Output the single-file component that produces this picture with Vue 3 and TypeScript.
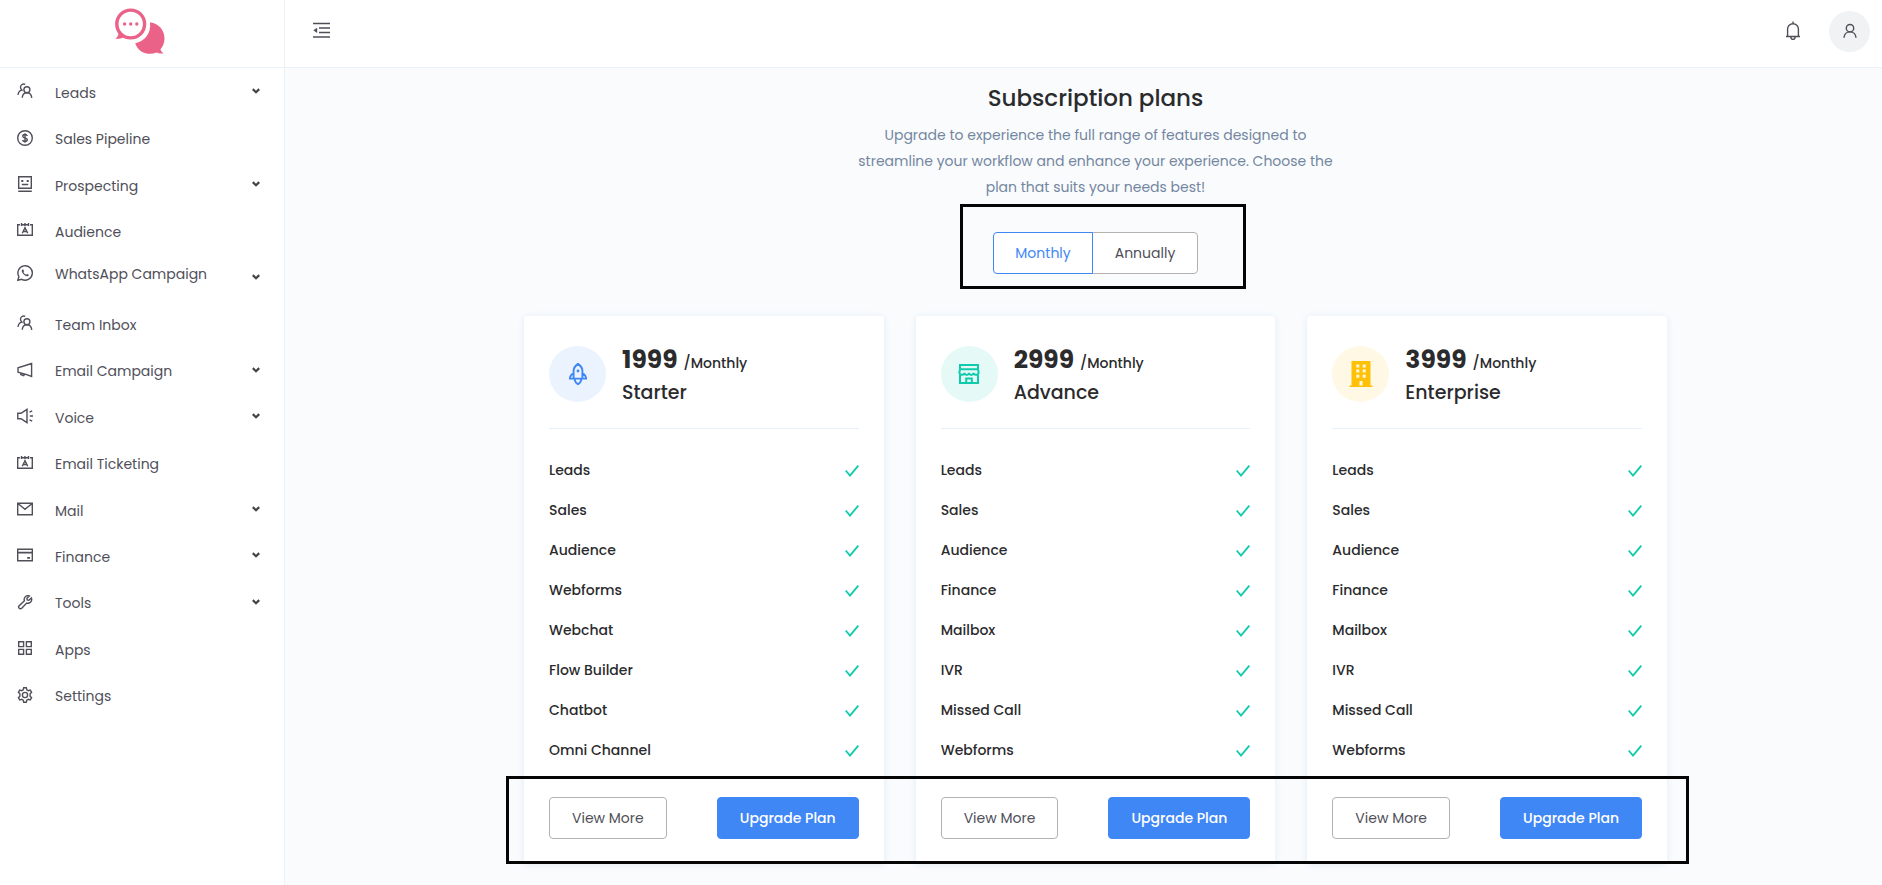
<script setup lang="ts">
import { ref } from 'vue'

interface NavItem {
  label: string
  icon: string
  expandable?: boolean
  raised?: boolean
}

interface Plan {
  name: string
  price: string
  tone: 'blue' | 'teal' | 'amber'
  features: string[]
}

const navItems: NavItem[] = [
  { label: 'Leads', icon: 'people', expandable: true },
  { label: 'Sales Pipeline', icon: 'dollar' },
  { label: 'Prospecting', icon: 'robot', expandable: true },
  { label: 'Audience', icon: 'board' },
  { label: 'WhatsApp Campaign', icon: 'whatsapp', expandable: true, raised: true },
  { label: 'Team Inbox', icon: 'people' },
  { label: 'Email Campaign', icon: 'megaphone', expandable: true },
  { label: 'Voice', icon: 'speaker', expandable: true },
  { label: 'Email Ticketing', icon: 'board' },
  { label: 'Mail', icon: 'mail', expandable: true },
  { label: 'Finance', icon: 'card', expandable: true },
  { label: 'Tools', icon: 'wrench', expandable: true },
  { label: 'Apps', icon: 'apps' },
  { label: 'Settings', icon: 'gear' },
]

const plans: Plan[] = [
  {
    name: 'Starter',
    price: '1999',
    tone: 'blue',
    features: ['Leads', 'Sales', 'Audience', 'Webforms', 'Webchat', 'Flow Builder', 'Chatbot', 'Omni Channel'],
  },
  {
    name: 'Advance',
    price: '2999',
    tone: 'teal',
    features: ['Leads', 'Sales', 'Audience', 'Finance', 'Mailbox', 'IVR', 'Missed Call', 'Webforms'],
  },
  {
    name: 'Enterprise',
    price: '3999',
    tone: 'amber',
    features: ['Leads', 'Sales', 'Audience', 'Finance', 'Mailbox', 'IVR', 'Missed Call', 'Webforms'],
  },
]

const period = ref<'Monthly' | 'Annually'>('Monthly')
</script>

<template>
  <div class="app">
    <aside class="sidebar">
      <a class="brand" href="#" aria-label="Home">
        <svg width="50" height="46" viewBox="0 0 50 46" aria-hidden="true">
          <circle cx="15.7" cy="16" r="13.9" fill="none" stroke="#ea6288" stroke-width="3.4" />
          <path d="M3.4 24.5c.4 2.200-.8 4.500-2.900 6.200 3.600.3 6.800-.4 9-2z" fill="#ea6288" />
          <circle cx="9.600" cy="16" r="1.700" fill="#ea6288" />
          <circle cx="15.700" cy="16" r="1.700" fill="#ea6288" />
          <circle cx="21.800" cy="16" r="1.700" fill="#ea6288" />
          <path d="M35 14.300C43.500 15.500 49.500 22 49.500 30.500c0 4.200-1.500 8-4 10.800.3 1.700 1.300 3 3.200 4-2.800.6-5.200.2-7.200-.8-2.400 1-5 1.500-7.800 1.300-6.400-.4-11.300-4.600-13.500-10.600C29.500 33.500 36.500 25.500 35 14.300z" fill="#ea6288" />
        </svg>
      </a>

      <nav class="nav" aria-label="Main">
        <component
          :is="item.expandable ? 'button' : 'a'"
          v-for="item in navItems"
          :key="item.label"
          class="nav-item"
          :href="item.expandable ? undefined : '#'"
          :type="item.expandable ? 'button' : undefined"
        >
          <span class="nav-lead" :class="{ 'nav-lead--raised': item.raised }">
            <svg class="line-icon" width="16" height="16" viewBox="0 0 16 16" aria-hidden="true">
              <g v-if="item.icon === 'people'">
                <path d="M5.200 14.800C5.400 12.400 6.900 9.700 9.900 9.700s4.600 2.700 4.900 5.100" />
                <circle cx="9.900" cy="6.700" r="3" />
                <path d="M8.200 1.400C6.500.400 3.500 1.200 3.500 4.200c0 1.500.7 2.300 1.400 2.900C2.400 7.600 1.300 9.500 1 11.800" />
              </g>
              <g v-else-if="item.icon === 'dollar'">
                <circle cx="8" cy="8" r="7.300" />
                <path d="M10.200 6C10 4.900 9.100 4.500 8 4.500c-1.300 0-2.200.6-2.200 1.700 0 2.500 4.500 1.100 4.500 3.600 0 1.100-1 1.700-2.300 1.700S5.800 11 5.700 9.900M8 3.200v9.600" />
              </g>
              <g v-else-if="item.icon === 'robot'">
                <path d="M1.700.700h12.600v11.600H1.700zM1.200 15.200h13.600M4.800 8.500h6.400" />
                <path d="M4.300 5h2M9.700 5h2" stroke-width="1.800" />
              </g>
              <g v-else-if="item.icon === 'board'">
                <path d="M3 2.700H.700v10.600h14.600V2.700H13M4.500 1v3M8 1v3M11.500 1v3M4.500 2.700h7" />
                <path d="M5.300 11.300 8 5.600l2.700 5.700M6.300 9.500h3.400" />
              </g>
              <g v-else-if="item.icon === 'whatsapp'">
                <path d="M.8 15.300 1.900 11.600A7.200 7.200 0 1 1 4.700 14.300z" />
                <path d="M5.300 4.400c-.9.700-.7 2.200.2 3.600 1.200 1.900 3 3.200 4.700 3.300.9 0 1.600-.6 1.700-1.500L10 8.900l-.8.900C8 9.300 7 8.400 6.400 7.100l.7-.8-.8-1.900z" fill="currentColor" stroke="none" />
              </g>
              <path v-else-if="item.icon === 'megaphone'" d="M14.600 1.500v13L9 12.300 1 10.300V5.800zM3.700 11v1.500l3 1.100 1-1.400" />
              <path v-else-if="item.icon === 'speaker'" d="M.8 5.300H4L10 1.400v13.200l-6-3.900H.8zM12.800 8H16M12.600 4.100l2.600-1.200M12.600 11.900l2.600 1.200" />
              <path v-else-if="item.icon === 'mail'" d="M.700 2.200h14.600v11.600H.700zM.900 2.500 8 8.300l7.100-5.800" />
              <g v-else-if="item.icon === 'card'">
                <path d="M.700 2.200h14.600v11.600H.700z" />
                <path d="M.700 5.600h14.600M10.200 10.900h2.800" stroke-width="1.700" />
              </g>
              <path v-else-if="item.icon === 'wrench'" d="M12.300 1.900 9.900 4.300l.3 1.700 1.700.3 2.500-2.400c.6 1.700.2 3.300-.9 4.400-1.100 1-2.500 1.200-3.800.8l-5 5.100a1.600 1.600 0 0 1-2.500-2.500l5.200-5C6.900 5.400 7.200 4 8.200 2.900 9.300 1.700 10.800 1.400 12.300 1.900z" />
              <path v-else-if="item.icon === 'apps'" d="M1.700 1.700h4.900v4.900H1.700zM9.400 1.700h4.900v4.900H9.400zM1.700 9.400h4.900v4.900H1.700zM9.400 9.400h4.900v4.900H9.400z" />
              <g v-else>
                <path d="M6.700.8h2.600l.5 2 1.500.9 2-.6 1.300 2.200-1.500 1.500v2.400l1.500 1.500-1.300 2.200-2-.6-1.500.9-.5 2H6.700l-.5-2-1.500-.9-2 .6-1.300-2.200 1.500-1.500V6.800L1.400 5.300l1.300-2.200 2 .6 1.500-.9z" />
                <circle cx="8" cy="8" r="2.600" />
              </g>
            </svg>
            <span class="nav-label">{{ item.label }}</span>
          </span>
          <svg v-if="item.expandable" class="chevron" width="8" height="6" viewBox="0 0 8 6" aria-hidden="true">
            <path d="M.8 1.100 4 4.300l3.200-3.200" />
          </svg>
        </component>
      </nav>
    </aside>

    <div class="page">
      <header class="topbar">
        <button class="icon-button" type="button" aria-label="Collapse menu">
          <svg class="line-icon" width="18" height="18" viewBox="0 0 18 18" aria-hidden="true">
            <path d="M0 1.500h17M6 6h11M6 10.500h11M0 15h17" stroke-width="1.700" />
            <path d="M.3 8.300 4.200 5.700v5.200z" fill="currentColor" stroke="none" />
          </svg>
        </button>
        <div class="topbar-actions">
          <button class="icon-button" type="button" aria-label="Notifications">
            <svg class="line-icon" width="16" height="20" viewBox="0 0 16 20" aria-hidden="true">
              <path d="M1 15.500h14M2.600 15.200V8.100a5.400 5.400 0 0 1 10.800 0v7.100M8 .5v2M5.800 16.200c.2 1.600 1 2.200 2.200 2.200s2-.6 2.200-2.200" />
            </svg>
          </button>
          <button class="avatar" type="button" aria-label="Account">
            <svg class="line-icon" width="16" height="16" viewBox="0 0 16 16" aria-hidden="true">
              <circle cx="8" cy="5.200" r="3.700" />
              <path d="M2 14.800C2.200 11.500 4.600 8.900 8 8.900s5.800 2.600 6 5.900" />
            </svg>
          </button>
        </div>
      </header>

      <main class="content">
        <h1 class="title">Subscription plans</h1>
        <p class="intro">
          Upgrade to experience the full range of features designed to streamline your workflow and
          enhance your experience. Choose the plan that suits your needs best!
        </p>

        <div class="period" role="group" aria-label="Billing period">
          <button class="period-option" type="button" :aria-pressed="period === 'Monthly'" @click="period = 'Monthly'">Monthly</button>
          <button class="period-option" type="button" :aria-pressed="period === 'Annually'" @click="period = 'Annually'">Annually</button>
          <span class="frame frame--period" aria-hidden="true"></span>
        </div>

        <div class="plans">
          <article v-for="plan in plans" :key="plan.name" class="plan">
            <header class="plan-head">
              <span class="plan-icon" :class="`plan-icon--${plan.tone}`">
                <svg v-if="plan.tone === 'blue'" width="20" height="24" viewBox="0 0 20 24" fill="none" stroke="currentColor" stroke-width="1.900" aria-hidden="true">
                  <path d="M10 1.900C7 4 5.600 6.200 5.600 8.800v7.800h8.800V8.800C14.400 6.200 13 4 10 1.900zM5.600 11.300C3.400 12.300 2 14 1.900 16.600h3.700M14.400 11.300c2.200 1 3.600 2.700 3.700 5.300h-3.700M6.600 17c.3 2.600 1.500 4.200 3.400 5.200 1.900-1 3.100-2.600 3.400-5.200" />
                  <circle cx="10" cy="9" r="1.400" fill="currentColor" stroke="none" />
                </svg>
                <svg v-else-if="plan.tone === 'teal'" width="22" height="22" viewBox="0 0 22 22" fill="none" stroke="currentColor" stroke-width="2" aria-hidden="true">
                  <path d="M2 1.900h18v4.300H2zM2 6.200l-.6 3.300c0 2.700 4.500 3.200 5.100.5.600 2.600 3.900 2.600 4.500 0 .6 2.600 3.900 2.600 4.500 0 .6 2.700 5.100 2.200 5.100-.5L20 6.200M2 12v8.100h18V12M8.200 20v-4.600h5.600V20" />
                </svg>
                <svg v-else width="24" height="28" viewBox="0 0 24 28" aria-hidden="true">
                  <path fill="currentColor" fill-rule="evenodd" d="M2.500 1h19v24.500h2V27h-23v-1.500h2zM7.300 4.500v3h3v-3zM13.700 4.500v3h3v-3zM7.300 9.600v3h3v-3zM13.700 9.600v3h3v-3zM7.300 14.700v3h3v-3zM13.700 14.700v3h3v-3zM10.500 21v4.500h3V21z" />
                </svg>
              </span>
              <div class="plan-text">
                <p class="price"><strong>{{ plan.price }}</strong><span>/Monthly</span></p>
                <h2 class="plan-name">{{ plan.name }}</h2>
              </div>
            </header>
            <ul class="features">
              <li v-for="feature in plan.features" :key="feature" class="feature">
                <span>{{ feature }}</span>
                <svg class="check" width="14" height="14" viewBox="0 0 14 14" aria-hidden="true">
                  <path d="M.7 7.500 5 12.500 13.300 2.600" />
                </svg>
              </li>
            </ul>
            <footer class="plan-actions">
              <button class="button" type="button">View More</button>
              <button class="button button--primary" type="button">Upgrade Plan</button>
            </footer>
          </article>
          <span class="frame frame--actions" aria-hidden="true"></span>
        </div>
      </main>
    </div>
  </div>
</template>

<style>
body {
  margin: 0;
  background: #f9fbfd;
}
</style>

<style scoped>
.app {
  display: grid;
  grid-template-columns: 285px minmax(0, 1fr);
  min-height: 100vh;
  background: #f9fbfd;
  color: #2b2b2d;
  font-family: Poppins, Inter, sans-serif;
  font-size: 14px;
}

*,
*::before,
*::after {
  box-sizing: border-box;
}

button {
  font: inherit;
  cursor: pointer;
}

.sidebar {
  border-right: 1px solid #ebf1f8;
  background: #fff;
}

.brand {
  display: flex;
  align-items: center;
  justify-content: center;
  height: 68px;
  padding: 0 4px 6px 0;
  border-bottom: 1px solid #ebf1f8;
}

.nav {
  display: grid;
  grid-auto-rows: 1fr;
  min-height: 650px;
}

.nav-item {
  display: flex;
  align-items: center;
  justify-content: space-between;
  padding: 0 24px 0 17px;
  border: 0;
  background: none;
  color: #504f59;
  text-align: left;
  text-decoration: none;
}

.nav-lead {
  display: flex;
  align-items: center;
  gap: 22px;
}

.nav-lead--raised {
  padding-bottom: 8px;
}

.nav-label {
  padding-top: 4px;
}

.line-icon {
  flex: none;
  fill: none;
  stroke: currentColor;
  stroke-width: 1.4;
}

.chevron {
  fill: none;
  stroke: #45444c;
  stroke-width: 2.2;
}

.topbar {
  display: flex;
  align-items: center;
  justify-content: space-between;
  height: 68px;
  padding: 0 12px 5px 28px;
  border-bottom: 1px solid #ebf1f8;
  background: #fff;
}

.topbar-actions {
  display: flex;
  align-items: center;
  gap: 28px;
}

.icon-button {
  display: flex;
  padding: 0;
  border: 0;
  background: none;
  color: #504f59;
}

.avatar {
  display: flex;
  align-items: center;
  justify-content: center;
  width: 41px;
  height: 41px;
  padding: 0;
  border: 0;
  border-radius: 50%;
  background: #f0f2f4;
  color: #504f59;
}

.content {
  display: flex;
  flex-direction: column;
  align-items: center;
  padding: 12px 0 20px 24px;
}

.title {
  margin: 0 0 6px;
  font-size: 23px;
  font-weight: 500;
  line-height: 36px;
}

.intro {
  max-width: 500px;
  margin: 0 0 32px;
  color: #7486a0;
  line-height: 26px;
  text-align: center;
}

.period {
  position: relative;
  display: flex;
  margin-bottom: 42px;
}

.period-option {
  min-width: 100px;
  height: 42px;
  padding: 0 20px;
  border: 1px solid #b3b1b4;
  border-radius: 4px 0 0 4px;
  background: #fff;
  color: #504f59;
}

.period-option + .period-option {
  min-width: 106px;
  margin-left: -1px;
  border-radius: 0 4px 4px 0;
}

.period-option[aria-pressed='true'] {
  z-index: 1;
  border-color: #3f87f5;
  color: #3f87f5;
}

.frame {
  position: absolute;
  z-index: 2;
  border: 3px solid #050505;
  pointer-events: none;
}

.frame--period {
  inset: -28px -48px -15px -33px;
}

.frame--actions {
  right: -22px;
  bottom: 0;
  left: -18px;
  height: 88px;
}

.plans {
  position: relative;
  display: grid;
  grid-template-columns: repeat(3, minmax(0, 1fr));
  gap: 32px;
  width: 100%;
  max-width: 1143px;
}

.plan {
  padding: 30px 25px 25px;
  border-radius: 4px;
  background: #fff;
  box-shadow: 0 1px 6px rgba(150, 180, 215, 0.22);
}

.plan-head {
  display: flex;
  align-items: flex-start;
  gap: 16px;
  padding-bottom: 21px;
  border-bottom: 1px solid #e7effa;
}

.plan-icon {
  display: flex;
  flex: none;
  align-items: center;
  justify-content: center;
  width: 57px;
  height: 56px;
  border-radius: 50%;
}

.plan-icon--blue {
  background: #ebf3fe;
  color: #3f87f5;
}

.plan-icon--teal {
  background: #e5f9f6;
  color: #0fcbac;
}

.plan-icon--amber {
  background: #fff8e5;
  color: #ffc107;
}

.plan-text {
  padding-top: 2px;
}

.price {
  display: flex;
  align-items: baseline;
  gap: 6px;
  margin: 0;
  font-weight: 500;
  line-height: 30px;
}

.price strong {
  font-size: 25px;
  font-weight: 700;
  line-height: 24px;
}

.plan-name {
  margin: 0;
  font-size: 19px;
  font-weight: 500;
  line-height: 29px;
}

.features {
  margin: 0;
  padding: 21px 0 27px;
  list-style: none;
}

.feature {
  display: flex;
  align-items: center;
  justify-content: space-between;
  height: 40px;
  font-weight: 500;
}

.check {
  fill: none;
  stroke: #0fcbac;
  stroke-width: 1.8;
}

.plan-actions {
  display: flex;
  justify-content: space-between;
}

.button {
  height: 42px;
  padding: 0 22px;
  border: 1px solid #b3b1b4;
  border-radius: 4px;
  background: #fff;
  color: #504f59;
}

.button--primary {
  border-color: #3f87f5;
  background: #3f87f5;
  color: #fff;
  font-weight: 500;
}
</style>
